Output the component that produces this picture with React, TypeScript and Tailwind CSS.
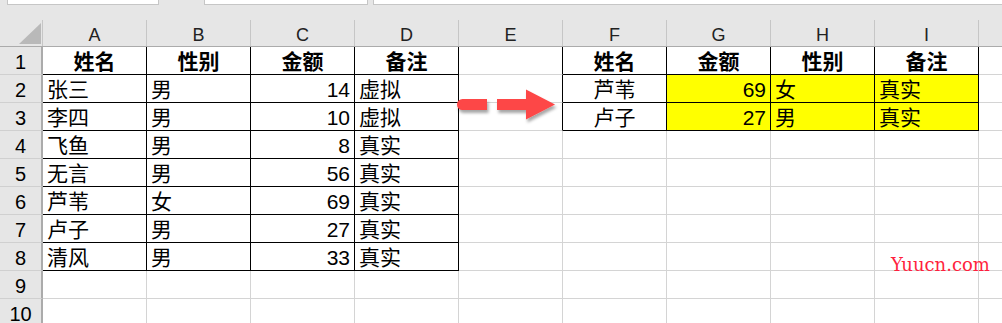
import React from 'react'

type Align = 'left' | 'center' | 'right'

// J is only partly on screen, its letter sits past the edge
const COLS = ['A', 'B', 'C', 'D', 'E', 'F', 'G', 'H', 'I', '']
const ROW_COUNT = 10

// source table A1:D8
const srcTable = [
  ['姓名', '性别', '金额', '备注'],
  ['张三', '男', '14', '虚拟'],
  ['李四', '男', '10', '虚拟'],
  ['飞鱼', '男', '8', '真实'],
  ['无言', '男', '56', '真实'],
  ['芦苇', '女', '69', '真实'],
  ['卢子', '男', '27', '真实'],
  ['清风', '男', '33', '真实'],
]

// lookup result F1:I3
const resultTable = [
  ['姓名', '金额', '性别', '备注'],
  ['芦苇', '69', '女', '真实'],
  ['卢子', '27', '男', '真实'],
]

const inSrc = (r: number, c: number) => r >= 1 && r <= 8 && c >= 0 && c <= 3
const inResult = (r: number, c: number) => r >= 1 && r <= 3 && c >= 5 && c <= 8
const inTable = (r: number, c: number) => inSrc(r, c) || inResult(r, c)

const cellInfo = (r: number, c: number): { text: string; align: Align; bold: boolean; fill: boolean } => {
  if (inSrc(r, c)) {
    const text = srcTable[r - 1][c]
    if (r === 1) return { text, align: 'center', bold: true, fill: false }
    return { text, align: c === 2 ? 'right' : 'left', bold: false, fill: false }
  }
  if (inResult(r, c)) {
    const k = c - 5
    const text = resultTable[r - 1][k]
    if (r === 1) return { text, align: 'center', bold: true, fill: false }
    const align: Align = k === 0 ? 'center' : k === 1 ? 'right' : 'left'
    return { text, align, bold: false, fill: k > 0 }
  }
  return { text: '', align: 'left', bold: false, fill: false }
}

const alignClass: Record<Align, string> = {
  left: 'justify-start',
  center: 'justify-center',
  right: 'justify-end',
}

const Cell = ({ r, c }: { r: number; c: number }) => {
  const info = cellInfo(r, c)
  const rightBlack = inTable(r, c) || inTable(r, c + 1)
  const bottomBlack = inTable(r, c) || inTable(r + 1, c)
  const last = c === COLS.length - 1
  return (
    <div
      className={[
        'flex h-[28px] shrink-0 items-center border-b px-[4px] pt-[2px] text-[21px] leading-none',
        last ? 'flex-1 border-r-0' : 'w-[104px] border-r',
        rightBlack ? 'border-r-black' : 'border-r-[#d4d4d4]',
        bottomBlack ? 'border-b-black' : 'border-b-[#d4d4d4]',
        info.fill ? 'bg-[#ffff00]' : 'bg-white',
        info.bold ? 'font-bold' : 'font-normal',
        alignClass[info.align],
      ].join(' ')}
    >
      {info.text}
    </div>
  )
}

const Arrow = () => (
  <svg
    className="absolute left-[452px] top-[85px]"
    width="112"
    height="44"
    viewBox="0 0 112 44"
  >
    <defs>
      <filter id="arrowShadow" x="-10%" y="-20%" width="130%" height="160%">
        <feDropShadow dx="1.5" dy="3" stdDeviation="1.6" floodColor="#000" floodOpacity="0.35" />
      </filter>
    </defs>
    <g fill="#fd4646" filter="url(#arrowShadow)">
      <path d="M10.5 14 H35 V25 H10.5 A5.5 5.5 0 0 1 10.5 14 Z" />
      <path d="M45 14 H75 V25 H45 Z" />
      <path d="M74 4.5 L103 19.5 L74 34.5 Z" />
    </g>
  </svg>
)

export default function App() {
  return (
    <div className="relative h-[323px] w-[1002px] overflow-hidden bg-[#e6e6e6] font-['Liberation_Sans','Noto_Sans_CJK_SC',sans-serif] text-black">
      {/* formula bar edge */}
      <div className="flex h-[20px] items-start">
        <div className="ml-[7px] h-[5px] w-[152px] border-b border-l border-r border-[#c6c6c6] bg-white" />
        <div className="ml-[45px] h-[5px] w-[164px] border-b border-l border-r border-[#c6c6c6] bg-white" />
        <div className="ml-[5px] h-[5px] flex-1 border-b border-l border-[#c6c6c6] bg-white" />
      </div>

      {/* column headers */}
      <div className="flex h-[27px] border-b border-[#ababab]">
        <div className="relative w-[43px] shrink-0 border-r border-[#c6c6c6]">
          <svg className="absolute left-[19px] top-[3px]" width="22" height="21" viewBox="0 0 22 21">
            <path d="M22 0 V21 H0 Z" fill="#b9b9b9" />
          </svg>
        </div>
        {COLS.map((col, i) => (
          <div
            key={i}
            className={[
              'flex items-center justify-center pt-[3px] text-[18px] leading-none text-[#222]',
              i === COLS.length - 1 ? 'flex-1' : 'w-[104px] shrink-0 border-r border-[#c6c6c6]',
            ].join(' ')}
          >
            {col}
          </div>
        ))}
      </div>

      {/* grid rows */}
      {Array.from({ length: ROW_COUNT }, (_, idx) => idx + 1).map((r) => (
        <div key={r} className="flex">
          <div className="flex h-[28px] w-[43px] shrink-0 items-center justify-center border-b border-r-2 border-b-[#d0d0d0] border-r-[#ababab] pt-[2px] text-[20px] leading-none">
            {r}
          </div>
          {COLS.map((_, c) => (
            <Cell key={c} r={r} c={c} />
          ))}
        </div>
      ))}

      <Arrow />

      <span className="absolute left-[891px] top-[256px] font-['DejaVu_Serif',serif] text-[18px] leading-none text-[#ff1f3d]">
        Yuucn.com
      </span>
    </div>
  )
}
